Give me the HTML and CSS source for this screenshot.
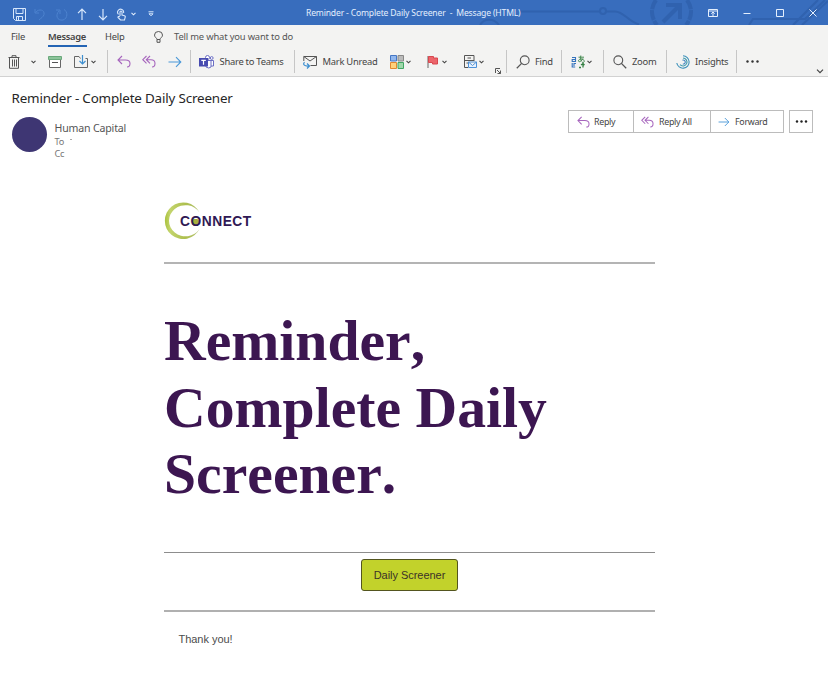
FILE: index.html
```html
<!DOCTYPE html>
<html lang="en">
<head>
<meta charset="utf-8">
<title>Reminder - Complete Daily Screener</title>
<link rel="stylesheet" href="styles.css">
</head>
<body>
<svg width="0" height="0" class="defs" aria-hidden="true">
  <symbol id="chev" viewBox="0 0 5 4"><path d="M.5 .8 2.500 2.800 4.500 .8" fill="none" stroke="currentColor" stroke-width="1.100"/></symbol>
  <symbol id="reply" viewBox="0 0 14 13"><path d="M5 1 1 5l4 4M1 5h7.500c3 0 4.500 1.500 4.500 3.600 0 1.900-1.200 3.400-3 3.400" fill="none" stroke="#a665bd" stroke-width="1.100"/></symbol>
  <symbol id="replyall" viewBox="0 0 14 13"><path d="M4.500 1 .8 4.700l3.700 3.700M8 1 4.300 4.700 8 8.400M4.300 4.700h4.500c2.800 0 4.200 1.700 4.200 3.800 0 2-1.200 3.500-3 3.500" fill="none" stroke="#a665bd" stroke-width="1.100"/></symbol>
  <symbol id="forward" viewBox="0 0 14 12"><path d="M.5 6h12.300M8 1.200 12.800 6 8 10.800" fill="none" stroke="#4a98d8" stroke-width="1.100"/></symbol>
  <symbol id="lens" viewBox="0 0 14 14"><circle cx="8.700" cy="5.300" r="4.400" fill="none" stroke="#555" stroke-width="1.100"/><path d="M5.600 8.400.8 13.200" stroke="#555" stroke-width="1.300"/></symbol>
</svg>

<header class="titlebar">
  <svg class="circuit" width="828" height="25" fill="none" stroke="#2b5ca6" stroke-width="2">
    <path d="M520 11.500h80M606 11.500h9c9 0 13 10 24 13M480 25c4-7 14-7 19 0"/><circle cx="603" cy="11" r="3"/>
    <path d="M656 0c-6 8-5 18 1 25M687 0c6 8 5 18-1 25" stroke-width="4" stroke-dasharray="10 1"/>
    <path d="M663 22 680 5M666 5h14v14" stroke-width="4"/>
    <path d="M749 25l4-6h52l20-19M793 25 818 0M802 25l26-24"/>
  </svg>
  <div class="quick">
    <svg width="13" height="13" viewBox="0 0 13 13" fill="none" stroke="#d8e8fc"><path d="M.5 .5h12v12h-10l-2-2zM3 .5v5h7v-5M3.500 12.500v-4h6v4M5.500 9v3"/></svg>
    <svg width="12" height="13" viewBox="0 0 12 13" fill="none" stroke="#4d83cf"><path d="M1 1v4h4M1.500 4.500C5 0 11 2 10 6.500 9.500 9 7 10 5 12"/></svg>
    <svg width="13" height="13" viewBox="0 0 13 13" fill="none" stroke="#4d83cf"><path d="M1 2h4v4M9 1.500c4 2 4 9-1 10.500-6 1-8-5-4-9"/></svg>
    <svg width="10" height="13" viewBox="0 0 10 13" fill="none" stroke="#d8e8fc" stroke-width="1.200"><path d="M5 12V1.200M1 5.200l4-4 4 4"/></svg>
    <svg width="10" height="13" viewBox="0 0 10 13" fill="none" stroke="#d8e8fc" stroke-width="1.200"><path d="M5 1v10.800M1 7.800l4 4 4-4"/></svg>
    <svg width="11" height="13" viewBox="0 0 11 13" fill="none" stroke="#d8e8fc" stroke-width="1.100"><path d="M2.500 6.300A3 3 0 1 1 7.500 5M4 8V4a1 1 0 0 1 2 0v3l2.500.7q1 .3.800 1.300L8.500 12H4.500L2 9.500q-.3-1.500 2-.8"/></svg>
    <svg width="5" height="4"><use href="#chev"/></svg>
    <svg width="6" height="6" viewBox="0 0 6 6" fill="none" stroke="#d8e8fc"><path d="M.5 .8h5M1 2.800l2 2 2-2z"/></svg>
  </div>
  <div class="window-title">Reminder - Complete Daily Screener&nbsp; -&nbsp; Message (HTML)</div>
  <div class="window-controls">
    <svg width="10" height="8" viewBox="0 0 10 8" fill="none" stroke="#e4effd"><path d="M.5 .5h9v7h-9zM1 2h8M5 7V3.200M3.300 4.700 5 3l1.700 1.700"/></svg>
    <svg width="8" height="8" viewBox="0 0 8 8" stroke="#e4effd"><path d="M.5 4.500h7"/></svg>
    <svg width="8" height="8" viewBox="0 0 8 8" fill="none" stroke="#e4effd"><path d="M.5 .5h7v7h-7z"/></svg>
    <svg width="8" height="8" viewBox="0 0 8 8" stroke="#e4effd"><path d="M.5 .5l7 7M7.500 .5l-7 7"/></svg>
  </div>
</header>

<nav class="tabs">
  <span class="tab">File</span>
  <span class="tab active">Message</span>
  <span class="tab">Help</span>
  <span class="tellme"><svg width="9" height="12" viewBox="0 0 9 12" fill="none" stroke="#555"><path d="M3 8.500c0-1.500-2.500-2.200-2.500-4.400a4 3.600 0 0 1 8 0C8.500 6.300 6 7 6 8.500zM3 8.500v2.800h3V8.500"/></svg>Tell me what you want to do</span>
</nav>

<div class="toolbar">
  <span class="tool"><svg width="12" height="14" viewBox="0 0 12 14" fill="none" stroke="#555"><path d="M.5 2.500h11M4 2V.7h4V2M1.500 2.500v10.800h9V2.500M4.500 4.500v7M6.500 4.500v7M8.500 4.500v7"/></svg></span>
  <span class="tool chevron"><svg width="5" height="4"><use href="#chev"/></svg></span>
  <span class="tool"><svg width="14" height="12" viewBox="0 0 14 12"><path d="M1.500 3v8.500h11V3" fill="#fff" stroke="#666"/><path d="M.5 .5h13v3H.5z" fill="#8cc49a" stroke="#6aa97c"/><path d="M4 6.500h6" stroke="#555"/></svg></span>
  <span class="tool"><svg width="15" height="14" viewBox="0 0 15 14" fill="none" stroke="#666"><path d="M6.500 3.500 5 1.500H.5v11h13V3.500h-2"/><path d="M8.500 0v9M5.500 6l3 3 3-3" stroke="#3d8fd0" stroke-width="1.200"/></svg><svg class="drop" width="5" height="4"><use href="#chev"/></svg></span>
  <i class="rule"></i>
  <span class="tool"><svg width="14" height="13"><use href="#reply"/></svg></span>
  <span class="tool"><svg width="14" height="13"><use href="#replyall"/></svg></span>
  <span class="tool"><svg width="14" height="12"><use href="#forward"/></svg></span>
  <i class="rule"></i>
  <span class="tool"><svg width="15" height="14" viewBox="0 0 15 14"><g fill="#fff" stroke="#6b6ec4"><circle cx="8.500" cy="2.500" r="2"/><circle cx="12.700" cy="3" r="1.400"/><path d="M7 5.500h5v6.500q-2 2-5 0zM12 5.500h2.500V11H12"/></g><path d="M0 3h9v8.500H0z" fill="#474bb0"/><path d="M2.300 5.300h4.500M4.500 5.300v4.500" stroke="#fff" stroke-width="1.200"/></svg><span class="label">Share to Teams</span></span>
  <i class="rule"></i>
  <span class="tool"><svg width="14" height="14" viewBox="0 0 14 14" fill="none" stroke="#555"><path d="M.8 6V1.500h12.700v9H7.500M.8 1.500 7 6l6.500-4.500"/><path d="M1.500 7c-2 2.500 0 4.500 4.500 4M4 8.500 6.500 11 4 13.500" stroke="#3d8fd0" stroke-width="1.200"/></svg><span class="label">Mark Unread</span></span>
  <span class="tool"><svg width="14" height="14" viewBox="0 0 14 14"><path d="M.5 .5h6v5.500h-6z" fill="#91b7ee" stroke="#4677c4"/><path d="M8 .5h5.500v5.500H8z" fill="#bbb" stroke="#888"/><path d="M.5 7.500h6v6h-6z" fill="#ffd17b" stroke="#e0882f"/><path d="M8 7.500h5.500v6H8z" fill="#9ed8aa" stroke="#42a564"/></svg><svg class="drop" width="5" height="4"><use href="#chev"/></svg></span>
  <span class="tool"><svg width="13" height="14" viewBox="0 0 13 14"><path d="M1 13V1" stroke="#666"/><path d="M1.500 1.500h5v1.500h4v6h-5V7.500h-4z" fill="#ec656b" stroke="#d8474f"/></svg><svg class="drop" width="5" height="4"><use href="#chev"/></svg></span>
  <span class="tool"><svg width="14" height="15" viewBox="0 0 14 15" fill="none"><path d="M11 7V1.500H1.500v12H5M1.500 6.500H11M4.500 4h3.500M3.500 9H5" stroke="#555"/><path d="M5.500 8h8v5.500h-8zM5.500 8l4 3.500 4-3.500" fill="#e7f2ff" stroke="#4d91d8"/></svg><svg class="drop" width="5" height="4"><use href="#chev"/></svg></span>
  <span class="tool launcher"><svg width="6" height="6" viewBox="0 0 6 6" fill="none" stroke="#555"><path d="M.5 5V.5H5M2 2l3.500 3.500M5.500 2.500v3h-3"/></svg></span>
  <i class="rule"></i>
  <span class="tool"><svg width="14" height="14"><use href="#lens"/></svg><span class="label near">Find</span></span>
  <i class="rule"></i>
  <span class="tool translate"><svg width="14" height="14" viewBox="0 0 14 14" fill="none"><path d="M1 2.500h3.500v4H1.200v-2h3M1.200 8v4h3M5 8.500H3V11" stroke="#3473bd" stroke-width="1.100"/><path d="M7.500 2.200H13M9.800 .5c-.5 3 0 5 1 6M12 3.500C10 7 7.500 7.500 7.500 5.700S12 3 13 5.500 11.500 7.500 11 7.500" stroke="#348043" stroke-width=".9"/><path d="M8 12.500h2M12 9v3.500M10 10l2-1.500 1.500 1.500" stroke="#348043" stroke-width="1.300"/></svg><svg class="drop" width="5" height="4"><use href="#chev"/></svg></span>
  <i class="rule"></i>
  <span class="tool"><svg class="mirror" width="14" height="14"><use href="#lens"/></svg><span class="label near">Zoom</span></span>
  <i class="rule"></i>
  <span class="tool"><svg width="14" height="14" viewBox="0 0 14 14" fill="none"><path d="M7 .8A6.200 6.200 0 1 1 .8 8" stroke="#3d91ba" stroke-width="1.100"/><path d="M7 3A4 4 0 1 1 4 9.700" stroke="#429cae" stroke-width="1.100"/><path d="M6.500 5.200A2 2 0 1 1 6.800 9" stroke="#3d80bd" stroke-width="1.100"/></svg><span class="label near">Insights</span></span>
  <i class="rule"></i>
  <span class="tool"><svg width="13" height="3" fill="#333"><circle cx="1.500" cy="1.500" r="1.200"/><circle cx="6.500" cy="1.500" r="1.200"/><circle cx="11.500" cy="1.500" r="1.200"/></svg></span>
  <span class="tool collapse"><svg width="8" height="5" viewBox="0 0 8 5" fill="none" stroke="#444" stroke-width="1.200"><path d="M1 .7l3 3 3-3"/></svg></span>
</div>

<section class="message-head">
  <h2 class="subject">Reminder - Complete Daily Screener</h2>
  <div class="head-row">
    <div class="avatar"></div>
    <div class="people">
      <div class="sender">Human Capital</div>
      <div class="line">To<span class="tick"></span></div>
      <div class="line">Cc</div>
    </div>
    <div class="actions">
      <span class="action"><svg width="13" height="12"><use href="#reply"/></svg>Reply</span>
      <span class="action all"><svg width="13" height="12"><use href="#replyall"/></svg>Reply All</span>
      <span class="action fwd"><svg width="12" height="10"><use href="#forward"/></svg>Forward</span>
    </div>
    <div class="more"><svg width="13" height="3" fill="#222"><circle cx="2" cy="1.500" r="1.200"/><circle cx="6.500" cy="1.500" r="1.200"/><circle cx="11" cy="1.500" r="1.200"/></svg></div>
  </div>
</section>

<main class="mail">
  <div class="brand">
    <svg class="crescent" width="38" height="38" viewBox="0 0 38 38"><defs><linearGradient id="lime" x1="0" x2="1"><stop offset="0" stop-color="#a9c13c"/><stop offset=".15" stop-color="#c3d46c"/><stop offset=".6" stop-color="#adbf4e"/><stop offset="1" stop-color="#b4c274"/></linearGradient></defs><path d="M35.500 10.500A18.300 18.300 0 1 0 35.500 27 16.500 15.600 0 1 1 35.500 10.500Z" fill="url(#lime)"/></svg>
    <span class="wordmark">C<span class="core">O</span>NNECT</span>
  </div>
  <h1 class="headline">Reminder,<br>Complete Daily<br>Screener.</h1>
  <div class="cta"><a class="button">Daily Screener</a></div>
  <p class="thanks">Thank you!</p>
</main>
</body>
</html>
```
FILE: styles.css
```css
* { box-sizing: border-box; }
body {
  margin: 0;
  width: 828px;
  height: 686px;
  overflow: hidden;
  background: #fff;
  color: #444;
  font-family: "Noto Sans", sans-serif;
  font-size: 9.4px;
  letter-spacing: -0.25px;
}
svg { display: block; flex: none; }
.defs { position: absolute; }

.titlebar {
  position: relative;
  display: flex;
  height: 25px;
  background: #386dbd;
  color: #e4effd;
}
.circuit { position: absolute; left: 0; top: 0; opacity: .6; }
.quick {
  position: relative;
  display: grid;
  grid-template-columns: 21px 21px 22px 21px 18px 15px 17px 155px;
  align-items: center;
  width: 293px;
  padding: 3px 0 0 13px;
  margin-right: 13px;
}
.window-title {
  position: relative;
  width: 401px;
  line-height: 26px;
  font-size: 8.6px;
  letter-spacing: -0.18px;
  white-space: nowrap;
}
.window-controls {
  position: relative;
  display: grid;
  grid-template-columns: 35px 33px 33px 8px;
  align-items: center;
  padding-left: 1px;
}

.tabs {
  display: flex;
  align-items: flex-start;
  height: 24px;
  padding: 3px 0 0 11px;
  background: #f3f3f2;
  line-height: 17px;
  white-space: nowrap;
}
.tab { width: 37px; }
.tab.active {
  width: 39px;
  margin-right: 18px;
  border-bottom: 2px solid #2464b4;
  font-weight: 600;
  font-size: 9.3px;
  letter-spacing: -0.3px;
}
.tellme { display: flex; align-items: center; gap: 11px; margin-left: 12px; color: #555; letter-spacing: -0.17px; }

.toolbar {
  display: grid;
  grid-template-columns: 21px 19px 26px 33px 10px 25px 26px 22px 9px 95px 9px 87px 37px 36px 32px 11px 10px 45px 10px 32px 10px 53px 10px 60px 10px 70px 12px;
  align-items: center;
  height: 28px;
  padding: 0 0 2px 7.5px;
  background: #f3f3f2;
  border-bottom: 1px solid #d2d2d2;
}
.tool { display: flex; align-items: center; white-space: nowrap; }
.tool .label { margin-left: 6px; }
.tool .near { margin-left: 5.5px; }
.drop { margin-left: 2px; }
.chevron { padding-left: 2px; }
.rule { width: 1px; height: 23px; background: #c6c6c6; }
.launcher, .collapse { align-self: end; }
.mirror { transform: scaleX(-1); }

.message-head { height: 93px; padding: 10px 0 0 11.500px; }
.subject {
  margin: 0;
  height: 23px;
  line-height: 23px;
  font-size: 13.4px;
  font-weight: 400;
  letter-spacing: -0.17px;
  color: #262626;
}
.head-row { display: flex; align-items: flex-start; }
.avatar { width: 35px; height: 35px; margin: 7px 8px 0 0; border-radius: 50%; background: #3e3673; }
.people { width: 503px; padding-top: 10px; margin-right: 10.500px; color: #555; }
.sender { font-size: 10.6px; line-height: 16px; letter-spacing: -0.18px; }
.line { display: flex; height: 12px; line-height: 12px; font-size: 9.2px; color: #777; }
.tick { width: 2px; height: 1px; margin: 3px 0 0 6px; background: #aaa; }
.actions { display: flex; height: 23px; border: 1px solid #bcbcbc; }
.action {
  display: flex;
  align-items: center;
  gap: 5px;
  width: 64px;
  padding-left: 8px;
  font-size: 8.9px;
  letter-spacing: -0.3px;
  white-space: nowrap;
}
.action:first-child { gap: 4px; }
.action.all { width: 77px; padding-left: 7px; border-left: 1px solid #bcbcbc; }
.action.fwd { width: 73px; padding-left: 7px; border-left: 1px solid #bcbcbc; }
.more {
  display: grid;
  place-items: center;
  width: 24px;
  height: 23px;
  margin-left: 5px;
  border: 1px solid #bcbcbc;
}

.mail { width: 491px; margin-left: 164px; letter-spacing: 0; font-family: "Liberation Sans", Arial, sans-serif; }
.brand { position: relative; height: 93.5px; padding-top: 43px; }
.brand::after {
  content: "";
  position: absolute;
  left: 0;
  right: 0;
  bottom: -0.5px;
  height: 2px;
  background: #b4b4b4;
}
.crescent { position: absolute; left: 0; top: 32px; }
.wordmark {
  position: relative;
  display: block;
  padding-left: 16px;
  font-size: 13.8px;
  font-weight: 700;
  line-height: 17px;
  letter-spacing: 0.5px;
  color: #301954;
}
.core { background: radial-gradient(circle at 5.500px 8.500px, #a8af3d 3.500px, transparent 4px); }
.headline {
  margin: 0;
  height: 289.5px;
  padding-top: 44.5px;
  border-bottom: 1px solid #8d8d8d;
  font-family: "Liberation Serif", "Times New Roman", serif;
  font-size: 57.7px;
  line-height: 66.500px;
  font-kerning: none;
  color: #3c1651;
}
.cta { display: flex; justify-content: center; height: 59px; padding-top: 6px; border-bottom: 2px solid #b0b0b0; }
.button {
  width: 97px;
  height: 32px;
  border: 1px solid #53551f;
  border-radius: 3px;
  background: #c2d22b;
  color: #3c3328;
  font-size: 11px;
  line-height: 31px;
  text-align: center;
  letter-spacing: -0.03px;
}
.thanks { margin: 20px 0 0 14.5px; font-size: 11px; line-height: 15px; letter-spacing: -0.03px; color: #4c4c4c; }
```
